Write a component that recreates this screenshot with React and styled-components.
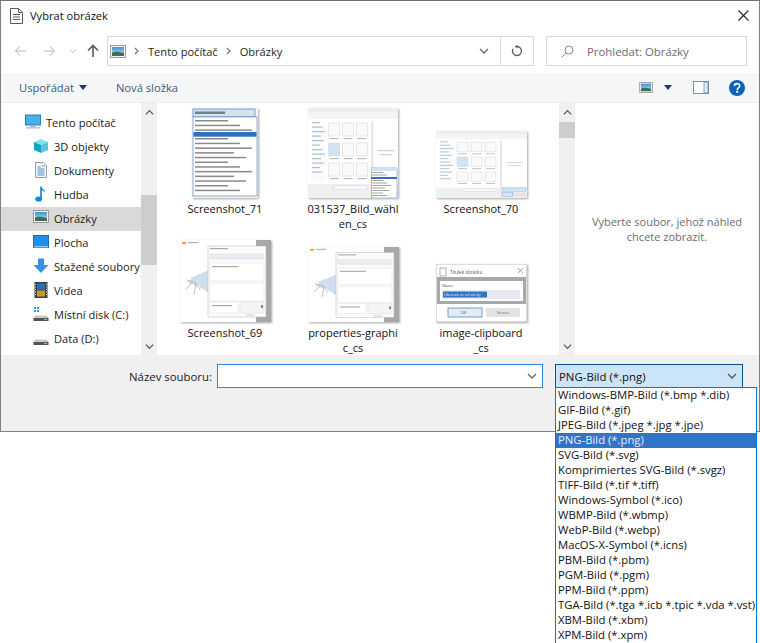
import React from 'react';
import styled, { createGlobalStyle } from 'styled-components';

const GlobalStyle = createGlobalStyle`
  html, body { margin: 0; padding: 0; background: #fff; }
  body { font-family: "Open Sans", "Noto Sans", "Liberation Sans", sans-serif; font-size: 11.4px; color: #1a1a1a; }
  * { box-sizing: border-box; }
`;

const Page = styled.div`
  width: 760px;
  height: 643px;
  overflow: hidden;
  position: relative;
`;

const Dialog = styled.div`
  width: 760px;
  height: 432px;
  border: 1px solid #7f7f7f;
  border-top-color: #6f6f6f;
  display: flex;
  flex-direction: column;
  background: #fff;
`;

const TitleBar = styled.div`
  height: 31px;
  display: flex;
  align-items: center;
  padding: 0 10px 2px 9px;
  gap: 7px;
  flex: none;
`;
const Title = styled.span`
  flex: 1;
  color: #111;
  font-size: 11.1px;
`;

const NavBar = styled.div`
  height: 41px;
  flex: none;
  display: flex;
  align-items: flex-start;
  padding: 4px 11px 0 0;
`;
const NavButtons = styled.div`
  width: 106px;
  height: 29px;
  flex: none;
  display: flex;
  align-items: center;
`;
const NavIcon = styled.span`
  display: flex;
  width: ${p => p.$w}px;
  justify-content: center;
`;
const AddressBox = styled.div`
  width: 427px;
  height: 30px;
  flex: none;
  border: 1px solid #d9d9d9;
  display: flex;
  align-items: center;
`;
const Crumbs = styled.div`
  flex: 1;
  display: flex;
  align-items: center;
  padding-left: 2px;
  font-size: 11.1px;
  color: #1e1e1e;
`;
const CrumbSep = styled.svg`
  margin: 0 9px 0 8px;
  flex: none;
`;
const AddressChevron = styled.span`
  display: flex;
  width: 32px;
  justify-content: center;
`;
const RefreshCell = styled.span`
  width: 33px;
  height: 28px;
  border-left: 1px solid #d9d9d9;
  display: flex;
  align-items: center;
  justify-content: center;
`;
const SearchBox = styled.div`
  margin-left: 12px;
  width: 201px;
  height: 30px;
  border: 1px solid #d9d9d9;
  display: flex;
  align-items: center;
  padding-left: 14px;
  gap: 13px;
  color: #6d6d6d;
`;

const Toolbar = styled.div`
  height: 30px;
  flex: none;
  background: #f5f6f7;
  border-bottom: 1px solid #eceded;
  display: flex;
  align-items: center;
  padding: 0 14px 0 18px;
  color: #3b5a80;
`;
const ToolButton = styled.span`
  display: flex;
  align-items: center;
  gap: 5px;
  margin-right: 29px;
  font-size: 11.2px;
`;
const ToolSpacer = styled.span`
  flex: 1;
`;
const ToolIcon = styled.span`
  display: flex;
  margin-left: ${p => p.$gap}px;
`;

const Body = styled.div`
  height: 252px;
  flex: none;
  display: flex;
  background: #fff;
`;
const Sidebar = styled.div`
  width: 140px;
  flex: none;
  padding-top: 8px;
  overflow: hidden;
  font-size: 11.1px;
`;
const SideRow = styled.div`
  height: 24px;
  display: flex;
  align-items: center;
  gap: 5px;
  white-space: nowrap;
  padding-bottom: 2px;
  padding-left: ${p => p.$indent}px;
  background: ${p => (p.$active ? '#d9d9d9' : 'transparent')};
`;
const SideIcon = styled.span`
  width: 16px;
  height: 16px;
  display: flex;
  flex: none;
`;

const Scrollbar = styled.div`
  width: ${p => p.$w}px;
  flex: none;
  background: #f0f0f0;
  display: flex;
  flex-direction: column;
  align-items: center;
`;
const ScrollArrow = styled.span`
  height: 18px;
  flex: none;
  display: flex;
  align-items: center;
  justify-content: center;
`;
const ScrollTrack = styled.div`
  flex: 1;
  width: 100%;
  padding-top: ${p => p.$top}px;
`;
const ScrollThumb = styled.div`
  width: 100%;
  height: ${p => p.$h}px;
  background: #cdcdcd;
`;

const FileGrid = styled.div`
  width: 402px;
  flex: none;
  padding: 3px 0 0 4px;
  display: grid;
  grid-template-columns: repeat(3, 128px);
  grid-template-rows: 124px 124px;
  overflow: hidden;
`;
const FileCell = styled.div`
  display: flex;
  flex-direction: column;
  align-items: center;
`;
const ThumbBox = styled.div`
  height: 92px;
  display: flex;
  align-items: flex-end;
  flex: none;
`;
const FileName = styled.div`
  margin-top: 3px;
  text-align: center;
  line-height: 15px;
  white-space: pre-line;
  font-size: 11px;
  color: #111;
`;

const Preview = styled.div`
  flex: 1;
  display: flex;
  align-items: flex-start;
  justify-content: center;
  text-align: center;
  padding-top: 111px;
  line-height: 15px;
  font-size: 11px;
  color: #6d6d6d;
`;

const Footer = styled.div`
  flex: 1;
  background: #f0f0f0;
  display: flex;
  align-items: flex-start;
  padding-top: 9px;
`;
const FieldLabel = styled.span`
  width: 216px;
  height: 24px;
  padding-right: 5px;
  flex: none;
  display: flex;
  align-items: center;
  justify-content: flex-end;
  color: #1a1a1a;
`;
const NameInput = styled.div`
  width: 326px;
  height: 24px;
  flex: none;
  background: #fff;
  border: 1px solid #2a84d2;
  display: flex;
  align-items: center;
  justify-content: flex-end;
  padding-right: 5px;
`;
const TypeSelect = styled.div`
  margin-left: 12px;
  width: 188px;
  height: 24px;
  flex: none;
  position: relative;
  background: #cce4f7;
  border: 1px solid #005499;
  display: flex;
  align-items: center;
  justify-content: space-between;
  padding: 0 5px 0 3px;
  color: #111;
`;
const TypeList = styled.div`
  position: absolute;
  left: -1px;
  top: 22px;
  width: 202px;
  background: #fff;
  border: 1px solid #0078d7;
  border-bottom: 0;
  z-index: 2;
  font-size: 11.3px;
`;
const TypeOption = styled.div`
  height: 15px;
  line-height: 14px;
  padding-left: 2px;
  white-space: nowrap;
  background: ${p => (p.$selected ? '#3274c6' : 'transparent')};
  color: ${p => (p.$selected ? '#e6eefa' : '#111')};
`;

const Chevron = ({ dir = 'down', c = '#555', s = 10 }) => (
  <svg width={s} height={s} viewBox="0 0 10 10">
    <path d={dir === 'down' ? 'M1 3l4 4 4-4' : 'M1 7l4-4 4 4'} fill="none" stroke={c} strokeWidth="1.3" />
  </svg>
);
const Sep = () => (
  <CrumbSep width="5" height="8" viewBox="0 0 5 8">
    <path d="M.8.8L4 4 .8 7.200" fill="none" stroke="#6a6a6a" strokeWidth="1.100" />
  </CrumbSep>
);
const Caret = ({ c = '#1f3a5f' }) => (
  <svg width="8" height="5" viewBox="0 0 8 5"><path d="M0 0h8L4 5z" fill={c} /></svg>
);

const DocIcon = () => (
  <svg width="13" height="16" viewBox="0 0 13 16" fill="none" stroke="#5a5a5a">
    <path d="M.5.5h8l4 4v11H.5z" fill="#fff" />
    <path d="M8.500.5v4h4M3 6.500h7M3 9h7M3 11.500h7" />
  </svg>
);
const CloseIcon = () => (
  <svg width="11" height="11" viewBox="0 0 11 11"><path d="M.5.5l10 10M10.500.5l-10 10" stroke="#222" strokeWidth="1.100" /></svg>
);
const ArrowLeft = ({ flip }) => (
  <svg width="13" height="12" viewBox="0 0 13 12" style={flip ? { transform: 'scaleX(-1)' } : undefined}>
    <path d="M12.500 6H1.500M6 1.500L1.500 6 6 10.500" fill="none" stroke="#d0d0d0" strokeWidth="1.300" />
  </svg>
);
const ArrowUp = () => (
  <svg width="12" height="13" viewBox="0 0 12 13">
    <path d="M6 13V2M1 6.500L6 1.500l5 5" fill="none" stroke="#5c5c5c" strokeWidth="1.600" />
  </svg>
);
const PicturesIcon = ({ w = 16, h = 13 }) => (
  <svg width={w} height={h} viewBox="0 0 16 13">
    <defs>
      <linearGradient id="sky" x1="0" y1="0" x2="0" y2="1">
        <stop offset="0" stopColor="#3f8fd6" />
        <stop offset="1" stopColor="#d5e8f4" />
      </linearGradient>
    </defs>
    <rect x=".5" y=".5" width="15" height="12" fill="#f4f4f4" stroke="#9a9a9a" />
    <rect x="2" y="2" width="12" height="9" fill="url(#sky)" />
    <path d="M2 8c3-2 6-1 12 0v3H2z" fill="#3d6f55" />
  </svg>
);
const RefreshIcon = () => (
  <svg width="12" height="12" viewBox="0 0 12 12">
    <path d="M6 1.500a4.500 4.500 0 1 1-4 2.400" fill="none" stroke="#5a5a5a" strokeWidth="1.300" />
    <path d="M6.500 0v3.400L3.600 1.600z" fill="#5a5a5a" />
  </svg>
);
const SearchIcon = () => (
  <svg width="13" height="13" viewBox="0 0 13 13" fill="none" stroke="#8a8a8a">
    <circle cx="8" cy="5" r="4" />
    <path d="M5.200 7.800L.7 12.300" />
  </svg>
);
const PaneIcon = () => (
  <svg width="16" height="13" viewBox="0 0 16 13">
    <rect x=".5" y=".5" width="15" height="12" fill="#fff" stroke="#8a9099" />
    <rect x="11" y="1" width="4" height="11" fill="#dcebf8" stroke="#3a78b5" strokeWidth=".6" />
  </svg>
);
const HelpIcon = () => (
  <svg width="16" height="16" viewBox="0 0 16 16">
    <circle cx="8" cy="8" r="8" fill="#0a63b8" />
    <path d="M5.400 6.100c0-3.300 5.300-3.300 5.300-.1 0 2-2.500 1.900-2.500 3.900" fill="none" stroke="#fff" strokeWidth="1.600" />
    <rect x="7.200" y="10.800" width="2" height="2" fill="#fff" />
  </svg>
);

const PcIcon = () => (
  <svg width="16" height="16" viewBox="0 0 16 16">
    <rect x=".5" y="1" width="15" height="10" fill="#4ab0ec" stroke="#2b7fb8" />
    <rect x="5.500" y="11" width="5" height="2" fill="#9fb3c2" />
    <rect x="1" y="13" width="14" height="1.600" fill="#b9c8d3" />
  </svg>
);
const CubeIcon = () => (
  <svg width="16" height="16" viewBox="0 0 16 16">
    <path d="M8 1l7 3-7 3-7-3z" fill="#7fe3ee" />
    <path d="M1 4l7 3v8l-7-3z" fill="#15a5c4" />
    <path d="M15 4L8 7v8l7-3z" fill="#53c7d8" />
  </svg>
);
const DocsIcon = () => (
  <svg width="16" height="16" viewBox="0 0 16 16">
    <path d="M2.500.5h8l3 3v12h-11z" fill="#f7f7f7" stroke="#9a9a9a" />
    <path d="M4.500 5h3M9 4h3M4.500 7h7M4.500 9h7M4.500 11h7M4.500 13h7" stroke="#4a8fcf" />
  </svg>
);
const MusicIcon = () => (
  <svg width="16" height="16" viewBox="0 0 16 16">
    <ellipse cx="5.600" cy="13" rx="3.400" ry="2.600" fill="#0f86e0" />
    <path d="M7.200 13V.5h1.400c.3 2.700 3.600 3 3.600 6.600-.9-2-2.400-2.700-3.300-2.900V13z" fill="#0f86e0" />
  </svg>
);
const DesktopIcon = () => (
  <svg width="16" height="16" viewBox="0 0 16 16">
    <rect x=".5" y="1.500" width="15" height="12" fill="#1f8fe8" stroke="#1670b8" />
    <rect x="1" y="12" width="14" height="1.500" fill="#8bc6f2" />
  </svg>
);
const DownloadIcon = () => (
  <svg width="16" height="16" viewBox="0 0 16 16">
    <path d="M5 .5h6V7h4.500L8 15 .5 7H5z" fill="#3a8fe0" />
  </svg>
);
const FilmIcon = () => (
  <svg width="16" height="16" viewBox="0 0 16 16">
    <rect x="1.500" y="0" width="13" height="16" fill="#3e3e3e" />
    <rect x="4" y="1.500" width="8" height="6" fill="#2f6fb8" />
    <rect x="4" y="8.500" width="8" height="6" fill="#c89a2e" />
    <path d="M2.500 2v12M13.500 2v12" stroke="#ddd" strokeDasharray="1 1.500" />
  </svg>
);
const DiskIcon = ({ win }) => (
  <svg width="16" height="16" viewBox="0 0 16 16">
    {win && <path d="M1 1h2v2H1zM4 1h2v2H4zM1 4h2v2H1zM4 4h2v2H4z" fill="#2a9be8" />}
    <path d="M2 9.500h12l1.500 2.500H.5z" fill="#c9c9c9" />
    <rect x=".5" y="12" width="15" height="3" fill="#555" />
    <rect x="11" y="13" width="3" height="1" fill="#6fdc6f" />
  </svg>
);

const ThumbSvg = styled.svg`
  display: block;
  filter: blur(0.45px) drop-shadow(1px 1px 1px rgba(0, 0, 0, 0.35));
`;

const TextLines = ({ x, y, w, n, step = 5, c = '#a4a4a4', h = 1.500 }) => (
  <>
    {Array.from({ length: n }, (_, i) => (
      <rect key={i} x={x} y={y + i * step} width={w * (0.55 + ((i * 7) % 5) * 0.1)} height={h} fill={c} />
    ))}
  </>
);

const ListThumb = () => (
  <ThumbSvg width="66" height="90" viewBox="0 0 66 90">
    <rect width="66" height="90" fill="#f4f4f4" />
    <rect x="1" y="1" width="62" height="8" fill="#cfe3f5" stroke="#3e6fa8" strokeWidth=".6" />
    <rect x="3" y="3.500" width="30" height="2.500" fill="#6f7f90" />
    <rect x="1" y="9" width="64" height="79" fill="#fff" stroke="#4a78b0" strokeWidth=".6" />
    <TextLines x={3} y={12} w={60} n={3} step={4.700} c="#8a8a8a" />
    <rect x="1.500" y="24" width="63" height="4.700" fill="#2f6fc4" />
    <TextLines x={3} y={30} w={60} n={12} step={4.700} c="#8a8a8a" />
  </ThumbSvg>
);

const DialogThumb = ({ width, height, open }) => (
  <ThumbSvg width={width} height={height} viewBox="0 0 91 90" preserveAspectRatio="none">
    <rect width="91" height="90" fill="#fff" />
    <rect width="91" height="4" fill="#ededed" />
    <rect x="0" y="4" width="91" height="7" fill="#f4f4f4" />
    <rect x="3" y="12" width="15" height="62" fill="#fbfbfb" />
    <TextLines x={4} y={14} w={14} n={12} step={4.500} c="#a9bfd6" h={1.200} />
    <rect x="19" y="13" width="44" height="62" fill="#fff" />
    {[0, 1, 2].map(r => [0, 1, 2].map(c => (
      <g key={`${r}${c}`}>
        <rect x={21 + c * 14} y={15 + r * 20} width="11" height="13" fill={r === 1 && c === 0 ? '#cfe5f7' : '#fafafa'} stroke="#cfcfcf" strokeWidth=".5" />
        <rect x={22 + c * 14} y={30 + r * 20} width="9" height="1.200" fill="#bcbcbc" />
      </g>
    )))}
    <rect x="64" y="13" width="2" height="62" fill="#e6e6e6" />
    <rect x="70" y="42" width="17" height="1.200" fill="#d0d0d0" />
    <rect x="72" y="46" width="13" height="1.200" fill="#d0d0d0" />
    <rect y="76" width="91" height="14" fill="#f0f0f0" />
    <rect x="26" y="78" width="34" height="3" fill="#fff" stroke="#a8c6e0" strokeWidth=".4" />
    {open ? (
      <>
        <rect x="64" y="60" width="26" height="30" fill="#fff" stroke="#3e78b5" strokeWidth=".5" />
        <rect x="64" y="60" width="26" height="3" fill="#cfe3f5" />
        <rect x="64" y="69" width="26" height="2" fill="#2f6fc4" />
        <TextLines x={65} y={64} w={20} n={2} step={2.500} c="#a4a4a4" h={1} />
        <TextLines x={65} y={72} w={20} n={7} step={2.500} c="#a4a4a4" h={1} />
      </>
    ) : (
      <>
        <rect x="66" y="76" width="24" height="5" fill="#cfe3f5" stroke="#7aa7d0" strokeWidth=".4" />
        <rect x="66" y="83" width="11" height="5" fill="#d5e6f5" stroke="#5f9bd2" strokeWidth=".5" />
        <rect x="79" y="83" width="11" height="5" fill="#e3e3e3" />
      </>
    )}
  </ThumbSvg>
);

const PropertiesThumb = ({ height }) => (
  <ThumbSvg width="91" height={height} viewBox="0 0 91 82" preserveAspectRatio="none">
    <rect width="91" height="82" fill="#fff" />
    <rect x="76" y="0" width="15" height="82" fill="#a8a8a8" />
    <rect x="2" y="2" width="4" height="2" fill="#f2a41f" />
    <rect x="8" y="2" width="10" height="1.200" fill="#b0b0b0" />
    <path d="M29 30L7 42l9 4zM29 30L10 38l12 11zM29 32L16 43l12 10z" fill="#cfdfee" />
    <path d="M7 40l9 3-2 12M12 43l-6 6M16 44l4 6" fill="none" stroke="#b0a48e" strokeWidth=".7" />
    <rect x="28" y="6" width="58" height="71" fill="#fbfbfb" stroke="#b5b5b5" strokeWidth=".5" />
    <rect x="30" y="8" width="18" height="1.200" fill="#a8a8a8" />
    <rect x="30" y="14" width="54" height="5" fill="#eceaf2" stroke="#d8d8d8" strokeWidth=".4" />
    <rect x="30" y="23" width="54" height="18" fill="#fff" stroke="#d8d8d8" strokeWidth=".4" />
    <rect x="32" y="26" width="26" height="1.200" fill="#a8a8a8" />
    <rect x="30" y="43" width="54" height="18" fill="#fff" stroke="#d8d8d8" strokeWidth=".4" />
    <rect x="30" y="62" width="28" height="11" fill="#fff" stroke="#d8d8d8" strokeWidth=".4" />
    <rect x="32" y="65" width="20" height="1.200" fill="#a8a8a8" />
    <rect x="60" y="62" width="24" height="11" fill="#f4f4f4" stroke="#d8d8d8" strokeWidth=".4" />
    <rect x="81" y="65" width="2" height="3" fill="#4f93d6" />
    <rect x="66" y="74" width="8" height="2.500" fill="#d5e6f5" />
  </ThumbSvg>
);

const ClipboardThumb = () => (
  <ThumbSvg width="91" height="58" viewBox="0 0 91 58">
    <rect width="91" height="58" fill="#fff" stroke="#8f8f8f" strokeWidth=".6" />
    <rect x="4" y="4" width="6" height="8" fill="#fff" stroke="#777" strokeWidth=".6" />
    <text x="14" y="10" fontSize="4.500" fill="#555" fontFamily="Open Sans">Titulek obrázku</text>
    <path d="M82 4l5 5M87 4l-5 5" stroke="#777" strokeWidth=".7" />
    <rect x="1" y="13" width="89" height="27" fill="#a9a9a9" />
    <rect x="4" y="17" width="83" height="20" fill="#fff" />
    <text x="6" y="23" fontSize="3.800" fill="#555" fontFamily="Open Sans">Název</text>
    <rect x="6" y="26" width="78" height="9" fill="#e8e8f2" />
    <rect x="7" y="27.500" width="44" height="6" fill="#3074c6" />
    <text x="8" y="32" fontSize="3.800" fill="#dbe7f7" fontFamily="Open Sans">Obrázek ze schránky</text>
    <rect x="12" y="44" width="34" height="9" fill="#e1ecf7" stroke="#4a8ecb" strokeWidth=".8" />
    <text x="25" y="50" fontSize="3.800" fill="#555" fontFamily="Open Sans">OK</text>
    <rect x="50" y="44" width="34" height="9" fill="#e3e3e3" />
    <text x="61" y="50" fontSize="3.800" fill="#666" fontFamily="Open Sans">Storno</text>
  </ThumbSvg>
);

const places = [
  { name: 'Tento počítač', icon: <PcIcon />, indent: 24 },
  { name: '3D objekty', icon: <CubeIcon />, indent: 32 },
  { name: 'Dokumenty', icon: <DocsIcon />, indent: 32 },
  { name: 'Hudba', icon: <MusicIcon />, indent: 32 },
  { name: 'Obrázky', icon: <PicturesIcon />, indent: 32, active: true },
  { name: 'Plocha', icon: <DesktopIcon />, indent: 32 },
  { name: 'Stažené soubory', icon: <DownloadIcon />, indent: 32 },
  { name: 'Videa', icon: <FilmIcon />, indent: 32 },
  { name: 'Místní disk (C:)', icon: <DiskIcon win />, indent: 32 },
  { name: 'Data (D:)', icon: <DiskIcon />, indent: 32 },
];

const files = [
  { name: 'Screenshot_71', thumb: <ListThumb /> },
  { name: '031537_Bild_wähl\nen_cs', thumb: <DialogThumb width={90} height={90} open /> },
  { name: 'Screenshot_70', thumb: <DialogThumb width={91} height={67} /> },
  { name: 'Screenshot_69', thumb: <PropertiesThumb height={82} /> },
  { name: 'properties-graphi\nc_cs', thumb: <PropertiesThumb height={75} /> },
  { name: 'image-clipboard\n_cs', thumb: <ClipboardThumb /> },
];

const types = [
  'Windows-BMP-Bild (*.bmp *.dib)',
  'GIF-Bild (*.gif)',
  'JPEG-Bild (*.jpeg *.jpg *.jpe)',
  'PNG-Bild (*.png)',
  'SVG-Bild (*.svg)',
  'Komprimiertes SVG-Bild (*.svgz)',
  'TIFF-Bild (*.tif *.tiff)',
  'Windows-Symbol (*.ico)',
  'WBMP-Bild (*.wbmp)',
  'WebP-Bild (*.webp)',
  'MacOS-X-Symbol (*.icns)',
  'PBM-Bild (*.pbm)',
  'PGM-Bild (*.pgm)',
  'PPM-Bild (*.ppm)',
  'TGA-Bild (*.tga *.icb *.tpic *.vda *.vst)',
  'XBM-Bild (*.xbm)',
  'XPM-Bild (*.xpm)',
];

const App = () => (
  <Page>
    <GlobalStyle />
    <Dialog>
      <TitleBar>
        <DocIcon />
        <Title>Vybrat obrázek</Title>
        <CloseIcon />
      </TitleBar>

      <NavBar>
        <NavButtons>
          <NavIcon $w={38}><ArrowLeft /></NavIcon>
          <NavIcon $w={20}><ArrowLeft flip /></NavIcon>
          <NavIcon $w={28}><Chevron c="#d0d0d0" s={8} /></NavIcon>
          <NavIcon $w={12}><ArrowUp /></NavIcon>
        </NavButtons>
        <AddressBox>
          <Crumbs>
            <PicturesIcon />
            <Sep />
            <span>Tento počítač</span>
            <Sep />
            <span>Obrázky</span>
          </Crumbs>
          <AddressChevron><Chevron c="#666" /></AddressChevron>
          <RefreshCell><RefreshIcon /></RefreshCell>
        </AddressBox>
        <SearchBox>
          <SearchIcon />
          <span>Prohledat: Obrázky</span>
        </SearchBox>
      </NavBar>

      <Toolbar>
        <ToolButton>Uspořádat <Caret /></ToolButton>
        <ToolButton>Nová složka</ToolButton>
        <ToolSpacer />
        <ToolIcon $gap={0}><PicturesIcon w={14} h={11} /></ToolIcon>
        <ToolIcon $gap={11}><Caret /></ToolIcon>
        <ToolIcon $gap={21}><PaneIcon /></ToolIcon>
        <ToolIcon $gap={20}><HelpIcon /></ToolIcon>
      </Toolbar>

      <Body>
        <Sidebar>
          {places.map(p => (
            <SideRow key={p.name} $indent={p.indent} $active={p.active}>
              <SideIcon>{p.icon}</SideIcon>
              {p.name}
            </SideRow>
          ))}
        </Sidebar>
        <Scrollbar $w={16}>
          <ScrollArrow><Chevron dir="up" c="#505050" s={9} /></ScrollArrow>
          <ScrollTrack $top={74}><ScrollThumb $h={70} /></ScrollTrack>
          <ScrollArrow><Chevron c="#505050" s={9} /></ScrollArrow>
        </Scrollbar>
        <FileGrid>
          {files.map(f => (
            <FileCell key={f.name}>
              <ThumbBox>{f.thumb}</ThumbBox>
              <FileName>{f.name}</FileName>
            </FileCell>
          ))}
        </FileGrid>
        <Scrollbar $w={16}>
          <ScrollArrow><Chevron dir="up" c="#505050" s={9} /></ScrollArrow>
          <ScrollTrack $top={1}><ScrollThumb $h={16} /></ScrollTrack>
          <ScrollArrow><Chevron c="#505050" s={9} /></ScrollArrow>
        </Scrollbar>
        <Preview>
          <span>Vyberte soubor, jehož náhled<br />chcete zobrazit.</span>
        </Preview>
      </Body>

      <Footer>
        <FieldLabel>Název souboru:</FieldLabel>
        <NameInput><Chevron c="#666" /></NameInput>
        <TypeSelect>
          <span>PNG-Bild (*.png)</span>
          <Chevron c="#555" />
          <TypeList>
            {types.map(t => (
              <TypeOption key={t} $selected={t.startsWith('PNG')}>{t}</TypeOption>
            ))}
          </TypeList>
        </TypeSelect>
      </Footer>
    </Dialog>
  </Page>
);

export default App;
